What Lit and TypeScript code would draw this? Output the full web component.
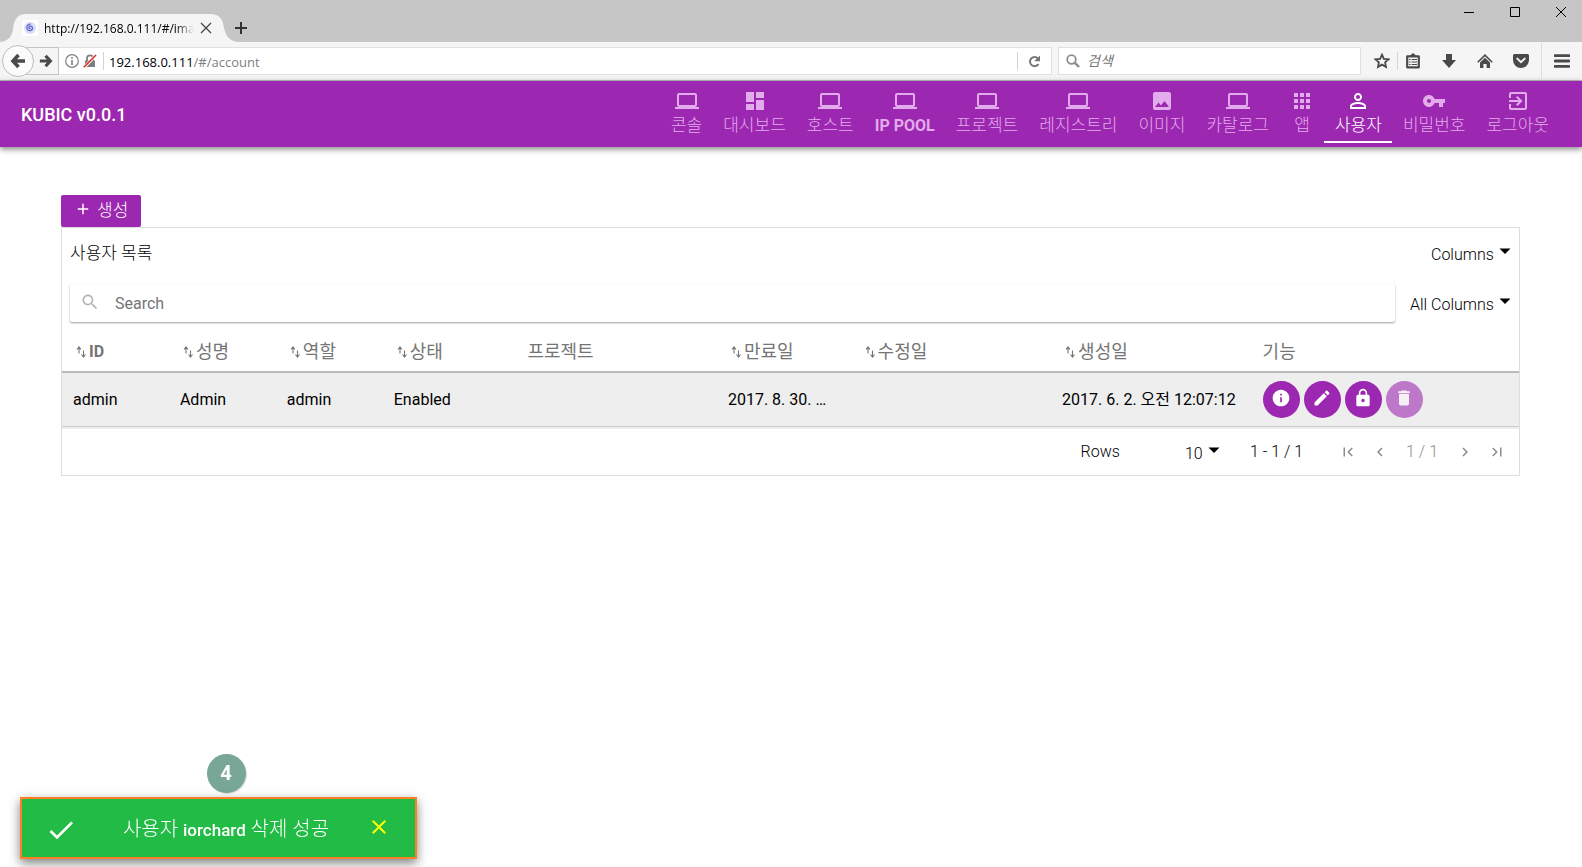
import { LitElement, html, css, svg, nothing } from "lit";
import { customElement, property } from "lit/decorators.js";
import { classMap } from "lit/directives/class-map.js";

const ICONS: Record<string, string> = {
  laptop: "M20 18c1.1 0 1.99-.9 1.99-2L22 6c0-1.1-.9-2-2-2H4c-1.1 0-2 .9-2 2v10c0 1.1.9 2 2 2H0v2h24v-2h-4zM4 6h16v10H4V6z",
  dashboard: "M3 13h8V3H3v10zm0 8h8v-6H3v6zm10 0h8V11h-8v10zm0-18v6h8V3h-8z",
  image: "M21 19V5c0-1.1-.9-2-2-2H5c-1.1 0-2 .9-2 2v14c0 1.1.9 2 2 2h14c1.1 0 2-.9 2-2zM8.5 13.5l2.5 3.01L14.5 12l4.5 6H5l3.5-4.5z",
  apps: "M4 8h4V4H4v4zm6 12h4v-4h-4v4zm-6 0h4v-4H4v4zm0-6h4v-4H4v4zm6 0h4v-4h-4v4zm6-10v4h4V4h-4zm-6 4h4V4h-4v4zm6 6h4v-4h-4v4zm0 6h4v-4h-4v4z",
  person: "M12 5.9a2.1 2.1 0 1 1 0 4.2 2.1 2.1 0 0 1 0-4.2m0 9c2.97 0 6.1 1.46 6.1 2.1v1.1H5.9V17c0-.64 3.13-2.1 6.1-2.1M12 4C9.79 4 8 5.79 8 8s1.79 4 4 4 4-1.79 4-4-1.79-4-4-4zm0 9c-2.67 0-8 1.34-8 4v3h16v-3c0-2.66-5.33-4-8-4z",
  key: "M12.65 10C11.83 7.67 9.61 6 7 6c-3.31 0-6 2.69-6 6s2.69 6 6 6c2.61 0 4.83-1.67 5.65-4H17v4h4v-4h2v-4H12.65zM7 14c-1.1 0-2-.9-2-2s.9-2 2-2 2 .9 2 2-.9 2-2 2z",
  exit: "M10.09 15.59L11.5 17l5-5-5-5-1.41 1.41L12.67 11H3v2h9.67l-2.58 2.59zM19 3H5c-1.11 0-2 .9-2 2v4h2V5h14v14H5v-4H3v4c0 1.1.89 2 2 2h14c1.1 0 2-.9 2-2V5c0-1.1-.9-2-2-2z",
  add: "M19 13h-6v6h-2v-6H5v-2h6V5h2v6h6v2z",
  search: "M15.5 14h-.79l-.28-.27C15.41 12.59 16 11.11 16 9.5 16 5.91 13.09 3 9.5 3S3 5.91 3 9.5 5.91 16 9.5 16c1.61 0 3.09-.59 4.23-1.57l.27.28v.79l5 4.99L20.49 19l-4.99-5zm-6 0C7.01 14 5 11.99 5 9.5S7.01 5 9.5 5 14 7.01 14 9.5 11.99 14 9.5 14z",
  info: "M12 2C6.48 2 2 6.48 2 12s4.48 10 10 10 10-4.48 10-10S17.52 2 12 2zm1 15h-2v-6h2v6zm0-8h-2V7h2v2z",
  edit: "M3 17.25V21h3.75L17.81 9.94l-3.75-3.75L3 17.25zM20.71 7.04c.39-.39.39-1.02 0-1.41l-2.34-2.34c-.39-.39-1.02-.39-1.41 0l-1.83 1.83 3.75 3.75 1.83-1.83z",
  lock: "M18 8h-1V6c0-2.76-2.24-5-5-5S7 3.24 7 6v2H6c-1.1 0-2 .9-2 2v10c0 1.1.9 2 2 2h12c1.1 0 2-.9 2-2V10c0-1.1-.9-2-2-2zm-6 9c-1.1 0-2-.9-2-2s.9-2 2-2 2 .9 2 2-.9 2-2 2zm3.1-9H8.9V6c0-1.71 1.39-3.1 3.1-3.1 1.71 0 3.1 1.39 3.1 3.1v2z",
  trash: "M6 19c0 1.1.9 2 2 2h8c1.1 0 2-.9 2-2V7H6v12zM19 4h-3.5l-1-1h-5l-1 1H5v2h14V4z",
  first: "M18.41 16.59L13.82 12l4.59-4.59L17 6l-6 6 6 6zM6 6h2v12H6z",
  prev: "M15.41 7.41L14 6l-6 6 6 6 1.41-1.41L10.83 12z",
  next: "M10 6L8.59 7.41 13.17 12l-4.58 4.59L10 18l6-6z",
  last: "M5.59 7.41L10.18 12l-4.59 4.59L7 18l6-6-6-6zM16 6h2v12h-2z",
  check: "M9 16.17L4.83 12l-1.42 1.41L9 19 21 7l-1.41-1.41z",
  close: "M19 6.41L17.59 5 12 10.59 6.41 5 5 6.41 10.59 12 5 17.59 6.41 19 12 13.41 17.59 19 19 17.59 13.41 12z",
  caret: "M1 9h22L12 20z",
};

@customElement("ui-icon")
class UiIcon extends LitElement {
  static styles = css`
    :host { display: block; flex: none; }
    .glyph { display: block; fill: currentColor; }
  `;
  @property() name = "";
  @property({ type: Number }) size = 24;
  render() {
    return html`<svg class="glyph" viewBox="0 0 24 24" width=${this.size} height=${this.size} aria-hidden="true">
      <path d=${ICONS[this.name] ?? ""}></path>
    </svg>`;
  }
}

@customElement("browser-frame")
class BrowserFrame extends LitElement {
  static styles = css`
    :host { display: block; font-family: "Open Sans", "Noto Sans CJK KR", sans-serif; color: #000; }
    button { border: 0; background: none; padding: 0; margin: 0; font: inherit; color: inherit; display: grid; place-items: center; flex: none; }
    svg { display: block; flex: none; }
    .titlebar { height: 42px; background: #c6c6c6; display: flex; align-items: flex-end; }
    .tab {
      width: 238px; height: 28px; box-sizing: border-box; padding: 0 22px; background: #f5f5f5;
      display: flex; align-items: center; clip-path: path("M0 28C9 27 12 22 13 15C14 6 17 0 26 0H210C220 0 223 6 224 14C226 22 229 27 238 28Z");
    }
    .tab-name {
      flex: 1; min-width: 0; margin-left: 6px; overflow: hidden; white-space: nowrap; font-size: 12px; line-height: 20px;
      padding-top: 1px; mask-image: linear-gradient(to right, #000 88%, transparent);
    }
    .tab-close { width: 20px; height: 20px; margin-left: 2px; }
    .new-tab { width: 28px; height: 28px; margin-right: auto; margin-left: -11px; }
    .window { align-self: flex-start; width: 46px; height: 24px; }
    .window:last-child { margin-right: -2px; }
    .toolbar {
      height: 39px; box-sizing: border-box; background: #f5f5f5; border-bottom: 1px solid #bdbdbd;
      display: flex; align-items: center; color: #4a4a4a; padding-left: 2px;
    }
    .back { width: 32px; height: 32px; box-sizing: border-box; border: 1px solid #bdbdbd; border-radius: 50%; background: #fbfbfb; z-index: 1; }
    .forward { width: 33px; height: 28px; box-sizing: border-box; border: 1px solid #c4c4c4; border-left: 0; margin-left: -8px; padding-left: 7px; }
    .address {
      flex: 1; height: 28px; box-sizing: border-box; background: #fff; border: 1px solid #e0e0e0; border-left: 0;
      display: flex; align-items: center; min-width: 0;
    }
    .address .site { margin-left: 6px; }
    .address .insecure { margin-left: 4px; }
    .rule { width: 1px; height: 18px; background: #d4d4d4; flex: none; }
    .address .rule { margin-left: 6px; }
    .url { flex: 1; margin-left: 5px; font-size: 13px; line-height: 20px; color: #808080; outline: 0; white-space: nowrap; overflow: hidden; padding-top: 1px; }
    .host { color: #000; }
    .reload { width: 33px; height: 26px; }
    .find {
      width: 303px; height: 28px; box-sizing: border-box; margin-left: 6px; background: #fff; border: 1px solid #e0e0e0;
      display: flex; align-items: center; padding: 0 7px; gap: 7px;
    }
    .find-input { flex: 1; min-width: 0; border: 0; padding: 0; outline: 0; background: none; font: 14px/20px "Open Sans", "Noto Sans CJK KR", sans-serif; }
    .find-input::placeholder { color: #777; opacity: 1; font-style: italic; }
    .tools { display: flex; align-items: center; padding-left: 3px; }
    .tool { width: 36px; height: 30px; }
    .tool.first { margin-right: -3px; }
    .tool.list { margin-left: -3px; }
    .tall { height: 36px; margin-left: 2px; background: #dcdcdc; }
    .menu { width: 40px; height: 30px; }
  `;
  render() {
    return html`
      <div class="titlebar">
        <div class="tab">
          <svg width="16" height="16" viewBox="0 0 16 16" aria-hidden="true">
            <rect width="16" height="16" fill="#fff"></rect>
            <circle cx="8" cy="8" r="6" fill="#d8dcf5"></circle>
            <path d="M8.5 8.3C7.5 9 6.5 8 7 7c.8-1.5 3.5-1 3.5 1.2 0 2.6-4 3.3-5.3 1C4 6.5 6 4 8.6 4.2" fill="none" stroke="#5b62c8" stroke-width="1.3"></path>
          </svg>
          <span class="tab-name">http://192.168.0.111/#/imag</span>
          <button class="tab-close" aria-label="탭 닫기">
            <svg width="12" height="12" viewBox="0 0 12 12"><path d="M1 1l10 10M11 1L1 11" stroke="#444" stroke-width="1.3"></path></svg>
          </button>
        </div>
        <button class="new-tab" aria-label="새 탭">
          <svg width="12" height="12" viewBox="0 0 12 12"><path d="M6 0v12M0 6h12" stroke="#333" stroke-width="2"></path></svg>
        </button>
        <button class="window" aria-label="최소화"><svg width="10" height="10"><path d="M0 5.5h10" stroke="#000"></path></svg></button>
        <button class="window" aria-label="최대화"><svg width="10" height="10"><path d="M.5.5h9v9h-9z" stroke="#000" fill="none"></path></svg></button>
        <button class="window" aria-label="닫기"><svg width="10" height="10"><path d="M0 0l10 10M10 0L0 10" stroke="#000"></path></svg></button>
      </div>
      <div class="toolbar">
        <button class="back" aria-label="뒤로">
          <svg width="16" height="16" viewBox="0 0 16 16"><path d="M8.5 2L3 8l5.5 6M3.5 8H15" fill="none" stroke="currentColor" stroke-width="3.6"></path></svg>
        </button>
        <button class="forward" aria-label="앞으로">
          <svg width="14" height="14" viewBox="0 0 16 16"><path d="M7.5 2L13 8l-5.5 6M12.5 8H1" fill="none" stroke="currentColor" stroke-width="3.6"></path></svg>
        </button>
        <div class="address">
          <svg class="site" width="14" height="14" viewBox="0 0 14 14" aria-hidden="true">
            <circle cx="7" cy="7" r="6.3" fill="none" stroke="#808080" stroke-width="1.2"></circle>
            <path d="M7 3v1.8M7 6v5" stroke="#808080" stroke-width="1.6"></path>
          </svg>
          <svg class="insecure" width="14" height="14" viewBox="0 0 14 14" aria-hidden="true">
            <path d="M2 6.5h10V13H2z" fill="#808080"></path>
            <path d="M4 7V4.3a3 3 0 0 1 6 0V7" fill="none" stroke="#808080" stroke-width="1.8"></path>
            <path d="M1 13.5L13 1" stroke="#fff" stroke-width="3"></path>
            <path d="M.8 13.2L13 1" stroke="#d92d21" stroke-width="1.6"></path>
          </svg>
          <span class="rule"></span>
          <div class="url" role="textbox" aria-label="주소" contenteditable="true" spellcheck="false"><span class="host">192.168.0.111</span>/#/account</div>
          <span class="rule"></span>
          <button class="reload" aria-label="새로 고침">
            <svg width="13" height="13" viewBox="0 0 13 13"><path d="M10.5 9A4.6 4.6 0 1 1 10 3.5" fill="none" stroke="#777" stroke-width="2"></path><path d="M12 .5v5.8H6.2z" fill="#777"></path></svg>
          </button>
        </div>
        <div class="find">
          <svg width="14" height="14" viewBox="0 0 14 14" aria-hidden="true"><circle cx="5.5" cy="5.5" r="4.3" fill="none" stroke="#8c8c8c" stroke-width="1.8"></circle><path d="M8.7 8.7L13 13" stroke="#8c8c8c" stroke-width="2.4"></path></svg>
          <input class="find-input" aria-label="검색" placeholder="검색" />
        </div>
        <div class="tools">
          <button class="tool first" aria-label="북마크">
            <svg width="16" height="16" viewBox="0 0 16 16"><path d="M8 1.6l1.9 4.2 4.6.5-3.4 3.1.9 4.5L8 11.6l-4 2.3.9-4.5L1.5 6.3l4.6-.5z" fill="none" stroke="currentColor" stroke-width="1.8"></path></svg>
          </button>
          <span class="rule"></span>
          <button class="tool list" aria-label="북마크 목록">
            <svg width="16" height="16" viewBox="0 0 16 16"><path d="M2.2 3.4h11.6v10.9H2.2z" fill="none" stroke="currentColor" stroke-width="2.2" stroke-linejoin="round"></path><path d="M4.5 3L8 0l3.5 3z" fill="currentColor"></path><path d="M4 6.5h1.5M6.5 6.5H12M4 9h1.5M6.5 9H12M4 11.5h1.5M6.5 11.5H12" stroke="currentColor" stroke-width="1.2"></path></svg>
          </button>
          <button class="tool" aria-label="다운로드">
            <svg width="14" height="14" viewBox="0 0 14 14"><path d="M4 0h6v6h4l-7 8-7-8h4z" fill="currentColor"></path></svg>
          </button>
          <button class="tool" aria-label="홈">
            <svg width="16" height="15" viewBox="0 0 16 15"><path d="M.8 8.2L8 1.2l7.2 7" fill="none" stroke="currentColor" stroke-width="1.6"></path><path d="M3 8.5L8 3.7l5 4.8V14H9.6v-4H6.4v4H3z" fill="currentColor"></path></svg>
          </button>
          <button class="tool" aria-label="포켓">
            <svg width="16" height="14" viewBox="0 0 16 14"><path d="M1.5 0h13A1.5 1.5 0 0 1 16 1.5V6A8 8 0 0 1 0 6V1.5A1.5 1.5 0 0 1 1.5 0z" fill="currentColor"></path><path d="M4.3 4.6L8 8.2l3.7-3.6" fill="none" stroke="#f5f5f5" stroke-width="2" stroke-linecap="round"></path></svg>
          </button>
          <span class="rule tall"></span>
          <button class="menu" aria-label="메뉴">
            <svg width="16" height="14" viewBox="0 0 16 14"><path d="M1 1.7h14M1 7h14M1 12.3h14" stroke="currentColor" stroke-width="2.8" stroke-linecap="round"></path></svg>
          </button>
        </div>
      </div>
    `;
  }
}

const NAV = [
  ["laptop", "콘솔"], ["dashboard", "대시보드"], ["laptop", "호스트"], ["laptop", "IP POOL"],
  ["laptop", "프로젝트"], ["laptop", "레지스트리"], ["image", "이미지"], ["laptop", "카탈로그"],
  ["apps", "앱"], ["person", "사용자"], ["key", "비밀번호"], ["exit", "로그아웃"],
];

@customElement("app-header")
class AppHeader extends LitElement {
  static styles = css`
    :host { display: block; font-family: Roboto, "Noto Sans CJK KR", sans-serif; }
    .bar {
      min-height: 66px; background: #9c27b0; color: #fff; display: flex; justify-content: space-between;
      padding: 0 23px 0 21px; box-shadow: 0 2px 6px rgba(0, 0, 0, .5);
    }
    .brand { margin: 0; font-size: 18px; line-height: 68px; height: 66px; font-weight: 500; }
    .nav { display: flex; }
    .link {
      min-width: 22px; padding: 8px 10px 0 11px; display: flex; flex-direction: column; align-items: center;
      color: #e2abeb; text-decoration: none; font-size: 17px; line-height: 24px; font-weight: 300; white-space: nowrap;
    }
    .link.latin { font-size: 16px; font-weight: 700; line-height: 26px; }
    .link.active { color: #fff; box-shadow: inset 0 -2px #fff; margin-bottom: 4px; }
  `;
  render() {
    return html`<header class="bar">
      <h1 class="brand">KUBIC v0.0.1</h1>
      <nav class="nav">
        ${NAV.map(([icon, label]) => html`<a href="#"
          class=${classMap({ link: true, active: label === "사용자", latin: label === "IP POOL" })}>
          <ui-icon name=${icon}></ui-icon><span>${label}</span></a>`)}
      </nav>
    </header>`;
  }
}

const COLUMNS = [
  { label: "ID", weight: 8, sort: true, value: "admin" },
  { label: "성명", weight: 8, sort: true, value: "Admin" },
  { label: "역할", weight: 8, sort: true, value: "admin" },
  { label: "상태", weight: 10, sort: true, value: "Enabled" },
  { label: "프로젝트", weight: 15, sort: false, value: "" },
  { label: "만료일", weight: 10, sort: true, value: "2017. 8. 30. …" },
  { label: "수정일", weight: 15, sort: true, value: "" },
  { label: "생성일", weight: 15, sort: true, value: "2017. 6. 2. 오전 12:07:12" },
  { label: "기능", weight: 20, sort: false, value: null },
];
const TOTAL = COLUMNS.reduce((sum, c) => sum + c.weight, 0);

const ACTIONS = [["info", "정보"], ["edit", "수정"], ["lock", "비밀번호 변경"], ["trash", "삭제"]];

@customElement("user-panel")
class UserPanel extends LitElement {
  static styles = css`
    :host { display: block; font-family: Roboto, "Noto Sans CJK KR", sans-serif; font-size: 16px; line-height: 24px; color: #000; }
    button { border: 0; background: none; padding: 0; margin: 0; font: inherit; color: inherit; flex: none; }
    .create {
      height: 32px; padding: 0 13px 2px; border-radius: 2px; background: #9c27b0; color: #fff; display: flex; align-items: center;
      gap: 5px; font-weight: 300; font-size: 17px;
    }
    .create ui-icon { padding-bottom: 2px; }
    .panel { border: 1px solid #ddd; }
    .head { display: flex; justify-content: space-between; align-items: center; height: 56px; padding: 0 8px 2px; box-sizing: border-box; }
    .title { margin: 0; font-size: 17px; line-height: 24px; font-weight: 300; padding-bottom: 4px; }
    .pick { display: flex; align-items: center; font-weight: 300; gap: 5px; white-space: nowrap; }
    .pick ui-icon { padding-bottom: 10px; }
    .drop { appearance: none; border: 0; background: none; padding: 0; margin: 0; font: inherit; color: inherit; outline: 0; }
    .tools { display: flex; align-items: center; gap: 15px; padding: 0 8px; }
    .tools .pick { padding-top: 4px; }
    .search {
      flex: 1; height: 38px; display: flex; align-items: center; border-radius: 2px; background: #fff;
      box-shadow: 0 1px 2px rgba(0, 0, 0, .38);
    }
    .search ui-icon { color: #b5b5b5; margin: 0 15px 2px 10px; }
    .query { flex: 1; min-width: 0; border: 0; padding: 2px 0 0; outline: 0; background: none; font: inherit; color: #000; }
    .query::placeholder { color: #757575; opacity: 1; }
    .grid { width: 100%; border-collapse: separate; border-spacing: 0; table-layout: fixed; }
    .grid th {
      height: 51px; padding: 10px 11px 0; text-align: left; color: #757575; font-size: 18px; font-weight: 400; box-sizing: border-box;
      border-bottom: 2px solid #b9b9b9; white-space: nowrap;
    }
    .label { display: flex; align-items: center; gap: 3px; }
    .label.sort { padding-left: 3px; cursor: pointer; }
    .label.latin { font-size: 16px; font-weight: 700; }
    .grid td {
      height: 53px; padding: 0 11px; background: #eee; border-bottom: 1px solid #ccc; overflow: hidden; text-overflow: ellipsis; white-space: nowrap;
    }
    .actions { display: flex; gap: 4px; }
    .round { width: 37px; height: 37px; border-radius: 50%; background: #9c27b0; color: #fff; display: grid; place-items: center; }
    .round ui-icon { padding-bottom: 3px; }
    .round:disabled { background: #bd78ca; color: #f5f0f6; }
    .foot { height: 48px; box-sizing: border-box; border-top: 2px solid #eee; display: flex; align-items: center; justify-content: flex-end; padding-right: 13px; font-weight: 300; }
    .rows { display: flex; align-items: center; gap: 65px; }
    .rows .pick { padding-top: 3px; }
    .range { margin: 0 36px 0 30px; color: #000; }
    .pager { display: flex; align-items: center; gap: 14px; color: #8c8c8c; }
    .page { margin: 0 4px 0 3px; }
  `;
  private sortIcon() {
    return svg`<svg width="10" height="14" viewBox="0 0 10 14" aria-hidden="true">
      <path d="M3 8.5V2M1 4.5L3 2l2 2.5M7.5 5.5V12M5.5 9.5l2 2.5 2-2.5" fill="none" stroke="#757575" stroke-width="1.1"></path></svg>`;
  }
  render() {
    return html`
      <button class="create"><ui-icon name="add" size="18"></ui-icon>생성</button>
      <section class="panel">
        <div class="head">
          <h2 class="title">사용자 목록</h2>
          <label class="pick"><select class="drop" aria-label="표시할 열"><option>Columns</option></select><ui-icon name="caret" size="12"></ui-icon></label>
        </div>
        <div class="tools">
          <label class="search"><ui-icon name="search" size="20"></ui-icon><input class="query" aria-label="Search" placeholder="Search" /></label>
          <label class="pick"><select class="drop" aria-label="검색할 열"><option>All Columns</option></select><ui-icon name="caret" size="12"></ui-icon></label>
        </div>
        <table class="grid">
          <colgroup>${COLUMNS.map((c) => html`<col style="width:${(c.weight / TOTAL) * 100}%" />`)}</colgroup>
          <thead><tr>${COLUMNS.map((c) => html`<th scope="col">
            <span class=${classMap({ label: true, sort: c.sort, latin: c.label === "ID" })}>${c.sort ? this.sortIcon() : nothing}${c.label}</span></th>`)}</tr></thead>
          <tbody><tr>${COLUMNS.map((c) => html`<td>${c.value === null
            ? html`<div class="actions">${ACTIONS.map(([icon, label]) => html`<button class="round" aria-label=${label} ?disabled=${icon === "trash"}>
                <ui-icon name=${icon} size="20"></ui-icon></button>`)}</div>`
            : c.value}</td>`)}</tr></tbody>
        </table>
        <div class="foot">
          <div class="rows"><label for="rows">Rows</label>
            <span class="pick"><select class="drop" id="rows"><option>10</option></select><ui-icon name="caret" size="12"></ui-icon></span>
          </div>
          <span class="range">1 - 1 / 1</span>
          <div class="pager">
            <button aria-label="첫 페이지"><ui-icon name="first" size="18"></ui-icon></button>
            <button aria-label="이전 페이지"><ui-icon name="prev" size="18"></ui-icon></button>
            <span class="page">1 / 1</span>
            <button aria-label="다음 페이지"><ui-icon name="next" size="18"></ui-icon></button>
            <button aria-label="마지막 페이지"><ui-icon name="last" size="18"></ui-icon></button>
          </div>
        </div>
      </section>
    `;
  }
}

@customElement("app-root")
class AppRoot extends LitElement {
  static styles = css`
    :host { display: block; min-height: 100vh; background: #fff; font-family: Roboto, "Noto Sans CJK KR", sans-serif; }
    .content { padding: 48px 62px 0 61px; }
    .notice { position: fixed; left: 20px; bottom: 8px; width: 397px; display: flex; flex-direction: column; align-items: center; gap: 4px; }
    .step {
      width: 39px; height: 39px; border-radius: 50%; background: #78a797; color: #fff; font-size: 20px; line-height: 39px; font-weight: 700;
      text-align: center; box-shadow: 1px 1px 1px rgba(0, 0, 0, .15); margin-left: 15px;
    }
    .toast {
      width: 100%; height: 62px; box-sizing: border-box; border: 2px solid #ff7f27; background: #22bb45; color: #fff;
      box-shadow: 0 4px 10px rgba(0, 0, 0, .5); display: flex; align-items: center; padding: 0 24px 0 23px; justify-content: space-between;
      font-size: 20px; line-height: 24px; font-weight: 300;
    }
    .toast p { margin: 0; padding-left: 8px; padding-top: 2px; }
    .toast ui-icon { padding-top: 3px; }
    .user { font-size: 17px; font-weight: 500; }
    .dismiss { border: 0; background: none; padding: 0 0 5px; color: #ff0; }
  `;
  render() {
    return html`
      <browser-frame></browser-frame>
      <app-header></app-header>
      <main class="content"><user-panel></user-panel></main>
      <div class="notice">
        <span class="step">4</span>
        <div class="toast" role="status">
          <ui-icon name="check" size="32"></ui-icon>
          <p>사용자 <span class="user">iorchard</span> 삭제 성공</p>
          <button class="dismiss" aria-label="닫기"><ui-icon name="close" size="24"></ui-icon></button>
        </div>
      </div>
    `;
  }
}
